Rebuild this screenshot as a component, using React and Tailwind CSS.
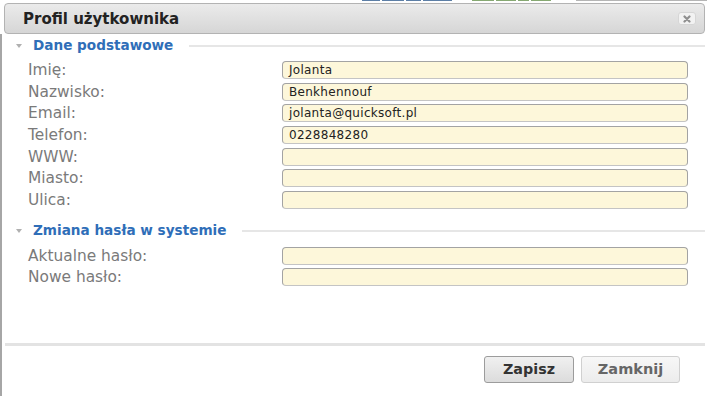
const basicFields = [
  { label: "Imię:", value: "Jolanta" },
  { label: "Nazwisko:", value: "Benkhennouf" },
  { label: "Email:", value: "jolanta@quicksoft.pl" },
  { label: "Telefon:", value: "0228848280" },
  { label: "WWW:", value: "" },
  { label: "Miasto:", value: "" },
  { label: "Ulica:", value: "" },
];

const passwordFields = [
  { label: "Aktualne hasło:", value: "" },
  { label: "Nowe hasło:", value: "" },
];

function Legend({ title }) {
  return (
    <div className="flex items-center h-[18px]">
      <span className="ml-[14px] w-0 h-0 border-l-[3px] border-r-[3px] border-t-[4px] border-l-transparent border-r-transparent border-t-[#b0b0b0]" />
      <span className="ml-[11px] text-[13.6px] font-bold text-[#2f6eb8] leading-none">{title}</span>
      <span className="flex-1 ml-[16px] mr-[2px] h-[2px] bg-[#e6e6e6]" />
    </div>
  );
}

function FieldRow({ label, value }) {
  return (
    <div className="flex items-start h-[21.67px]">
      <label className="w-[280px] pl-[26px] text-[15.4px] leading-[18px] text-[#7a7a7a]">{label}</label>
      <div className="w-[406px] h-[18px] rounded-[4px] border border-[#a3a3a3] border-b-[#c4c4c4] bg-[#fdf7da] pl-[6px] flex items-center text-[12px] tracking-[0.3px] text-[#222] leading-none">
        {value}
      </div>
    </div>
  );
}

export default function App() {
  return (
    <div className="w-[707px] h-[396px] bg-white overflow-hidden font-['DejaVu_Sans',sans-serif]">
      {/* page behind the dialog */}
      <div className="h-[3px] flex items-start">
        <div className="ml-[362px] flex gap-[2px] h-[1px]">
          <span className="w-[18px] bg-[#5d7fa6]" />
          <span className="w-[22px] bg-[#5d7fa6]" />
          <span className="w-[15px] bg-[#5d7fa6]" />
          <span className="w-[29px] bg-[#5d7fa6]" />
        </div>
        <div className="ml-[20px] flex gap-[2px] h-[1px]">
          <span className="w-[22px] bg-[#86a872]" />
          <span className="w-[20px] bg-[#86a872]" />
          <span className="w-[11px] bg-[#86a872]" />
          <span className="w-[20px] bg-[#86a872]" />
        </div>
        <div className="ml-[25px] flex-1 h-[1px] bg-[#b5b5b5]" />
      </div>

      {/* header */}
      <div className="ml-[4px] mr-[2px] h-[31px] rounded-[4px] border border-[#b3b3b3] bg-gradient-to-b from-[#ebebeb] to-[#d6d6d6] flex items-center justify-between">
        <span className="ml-[18px] mt-[1px] text-[15px] font-bold text-[#222]">Profil użytkownika</span>
        <button className="mr-[8px] w-[18px] h-[13px] rounded-[3px] bg-[#f2f2f2] border border-[#d6d6d6] flex items-center justify-center">
          <svg width="8" height="8" viewBox="0 0 8 8">
            <path d="M1.5 1.5L6.5 6.5M6.5 1.5L1.5 6.5" stroke="#8f8f8f" strokeWidth="2.2" strokeLinecap="round" />
          </svg>
        </button>
      </div>

      {/* body */}
      <div className="h-[362px] border-l-2 border-[#a6a6a6] flex flex-col">
        <div className="mt-[3px]">
          <Legend title="Dane podstawowe" />
        </div>
        <div className="mt-[6px] flex flex-col">
          {basicFields.map((f) => (
            <FieldRow key={f.label} label={f.label} value={f.value} />
          ))}
        </div>
        <div className="mt-[9px]">
          <Legend title="Zmiana hasła w systemie" />
        </div>
        <div className="mt-[7px] flex flex-col">
          {passwordFields.map((f) => (
            <FieldRow key={f.label} label={f.label} value={f.value} />
          ))}
        </div>

        <div className="mt-[53px] ml-[3px] mr-[2px] h-[3px] bg-[#e3e3e3]" />

        <div className="mt-[10px] flex justify-end gap-[7px] mr-[27px]">
          <button className="w-[90px] h-[27px] rounded-[3px] border border-[#9c9c9c] bg-gradient-to-b from-[#f0f0f0] to-[#dcdcdc] text-[14.3px] font-bold text-[#333]">
            Zapisz
          </button>
          <button className="w-[99px] h-[27px] rounded-[3px] border border-[#d0d0d0] bg-gradient-to-b from-[#f7f7f7] to-[#ececec] text-[14.5px] font-semibold text-[#666]">
            Zamknij
          </button>
        </div>
      </div>
    </div>
  );
}
